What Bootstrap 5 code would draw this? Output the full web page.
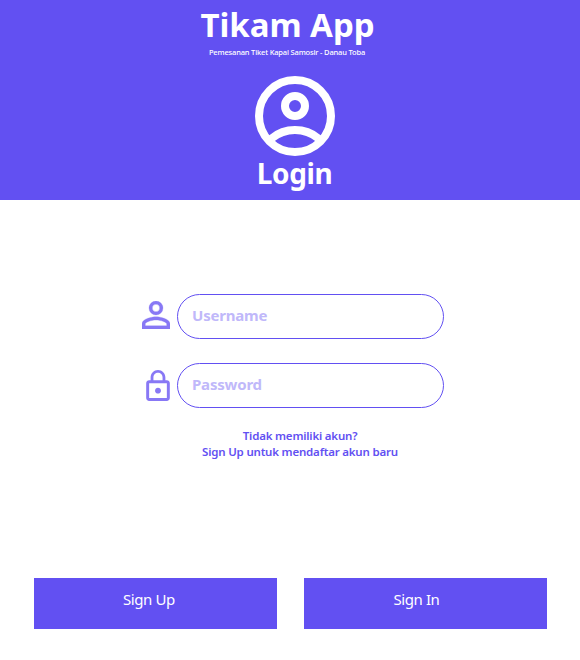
<!DOCTYPE html>
<html lang="id">
<head>
<meta charset="utf-8">
<meta name="viewport" content="width=device-width, initial-scale=1">
<title>Tikam App - Login</title>
<link href="https://cdn.jsdelivr.net/npm/bootstrap@5.3.0/dist/css/bootstrap.min.css" rel="stylesheet">
<style>
  :root { --tikam: #6250f2; }
  body { font-family: "Noto Sans", "Open Sans", sans-serif; height: 660px; overflow: hidden; }
  .hero { background: var(--tikam); height: 200px; }
  .brand { width: 575px; padding-top: 2px; }
  .brand-name { font-size: 33px; line-height: 45px; font-weight: 700; letter-spacing: -.05px; }
  .tagline { font-size: 7.5px; line-height: 10px; font-weight: 500; letter-spacing: -.17px; padding-right: 1px; }
  .profile { width: 590px; padding-top: 19px; }
  .login-title { font-size: 28px; line-height: 34px; font-weight: 700; letter-spacing: -.4px; padding-right: 1px; }
  .login-form { width: 302px; margin-left: 142px; margin-top: 94px; gap: 24px; }
  .field-icon { width: 35px; color: #8878f5; }
  .user-icon { padding-bottom: 3px; }
  .lock-icon { padding-left: 4px; }
  .form-control.pill { height: 45px; border: 1px solid var(--tikam); padding: 0 14px 3px; font-size: 15px; font-weight: 700; letter-spacing: -.2px; color: var(--tikam); }
  .form-control.pill::placeholder { color: #c0b8fa; opacity: 1; }
  .hint { width: 600px; margin-top: 20px; font-size: 11.5px; line-height: 16px; font-weight: 600; letter-spacing: -.2px; color: var(--tikam); }
  .actions { margin: 118px 33px 0 34px; gap: 27px; }
  .btn.action { background: var(--tikam); color: #fff; border: 0; height: 51px; font-size: 15px; line-height: 20px; letter-spacing: -.4px; padding: 0 13px 9px 0; }
  .btn.action.enter { padding-right: 18px; }
</style>
</head>
<body class="bg-white">
<header class="hero text-white text-center">
  <div class="brand">
    <h1 class="brand-name mb-0">Tikam App</h1>
    <p class="tagline mb-0"><span>Pemesanan Tiket Kapal Samosir - Danau Toba</span></p>
  </div>
  <div class="profile">
    <svg class="d-block mx-auto" width="80" height="80" viewBox="0 0 80 80" fill="none" stroke="#fff" stroke-width="8" aria-hidden="true">
      <circle cx="40" cy="40" r="36"/>
      <circle cx="40" cy="30" r="10"/>
      <path d="M16.500 62.500A37 37 0 0 1 63.500 62.500"/>
    </svg>
    <h2 class="login-title mb-0">Login</h2>
  </div>
</header>
<main>
  <form class="login-form d-flex flex-column">
    <div class="d-flex align-items-center">
      <span class="field-icon user-icon flex-shrink-0">
        <svg class="d-block" width="28" height="28" viewBox="4 4 16 16" fill="currentColor" stroke="currentColor" stroke-width=".15" aria-hidden="true"><path d="M12 5.900a2.100 2.100 0 1 1 0 4.200 2.100 2.100 0 0 1 0-4.200m0 9c2.970 0 6.100 1.460 6.100 2.100v1.100H5.900V17c0-.64 3.130-2.100 6.100-2.100M12 4a4 4 0 1 0 0 8 4 4 0 0 0 0-8m0 9c-2.670 0-8 1.340-8 4v3h16v-3c0-2.660-5.330-4-8-4"/></svg>
      </span>
      <input class="form-control rounded-pill pill" type="text" placeholder="Username" aria-label="Username">
    </div>
    <div class="d-flex align-items-center">
      <span class="field-icon lock-icon flex-shrink-0">
        <svg class="d-block" width="24" height="31" viewBox="4 1 16 21" fill="currentColor" aria-hidden="true"><path d="M12 17c1.100 0 2-.9 2-2s-.9-2-2-2-2 .9-2 2 .9 2 2 2m6-9h-1V6c0-2.760-2.240-5-5-5S7 3.240 7 6v2H6c-1.100 0-2 .9-2 2v10c0 1.100.9 2 2 2h12c1.100 0 2-.9 2-2V10c0-1.100-.9-2-2-2M8.900 6c0-1.710 1.390-3.100 3.100-3.100s3.100 1.390 3.100 3.100v2H8.900zM18 20H6V10h12z"/></svg>
      </span>
      <input class="form-control rounded-pill pill" type="password" placeholder="Password" aria-label="Password">
    </div>
  </form>
  <p class="hint text-center mb-0"><span>Tidak memiliki akun?</span><br><span>Sign Up untuk mendaftar akun baru</span></p>
  <div class="actions d-flex">
    <button class="btn action rounded-0 flex-fill w-50" type="button">Sign Up</button>
    <button class="btn action enter rounded-0 flex-fill w-50" type="button">Sign In</button>
  </div>
</main>
<script src="https://cdn.jsdelivr.net/npm/bootstrap@5.3.0/dist/js/bootstrap.bundle.min.js"></script>
</body>
</html>
